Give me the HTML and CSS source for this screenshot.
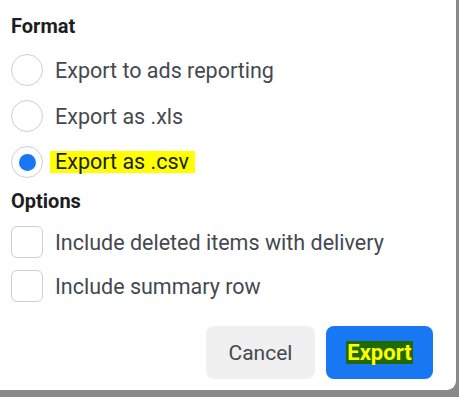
FILE: index.html
```html
<!DOCTYPE html>
<html lang="en">
<head>
  <meta charset="UTF-8">
  <meta name="viewport" content="width=device-width, initial-scale=1.0">
  <title>Export</title>
  <link rel="stylesheet" href="styles.css">
</head>
<body>
  <div class="dialog">
    <h3 class="section-title">Format</h3>
    <div class="choices">
      <label class="choice">
        <span class="radio"></span>
        <span class="choice-text">Export to ads reporting</span>
      </label>
      <label class="choice">
        <span class="radio"></span>
        <span class="choice-text">Export as .xls</span>
      </label>
      <label class="choice">
        <span class="radio checked"></span>
        <span class="choice-text marked">Export as .csv</span>
      </label>
    </div>

    <h3 class="section-title options-title">Options</h3>
    <div class="checks">
      <label class="check">
        <span class="box"></span>
        <span class="choice-text">Include deleted items with delivery</span>
      </label>
      <label class="check">
        <span class="box"></span>
        <span class="choice-text">Include summary row</span>
      </label>
    </div>

    <div class="footer">
      <button class="btn btn-cancel">Cancel</button>
      <button class="btn btn-export"><span class="export-mark">Export</span></button>
    </div>
  </div>
</body>
</html>
```

FILE: styles.css
```css
* {
  margin: 0;
  padding: 0;
  box-sizing: border-box;
}

body {
  font-family: Roboto, 'Liberation Sans', Arial, sans-serif;
  background: #8a8a8a;
  width: 459px;
  height: 397px;
  overflow: hidden;
}

.dialog {
  width: 456px;
  height: 390px;
  background: #fff;
  border-bottom-right-radius: 9px;
  padding: 14px 23px 11px 11px;
  display: flex;
  flex-direction: column;
}

.section-title {
  font-size: 20px;
  line-height: 24px;
  font-weight: 700;
  color: #1c1e21;
  margin-bottom: 9px;
}

.options-title {
  margin-top: 4px;
  margin-bottom: 7px;
}

.choices {
  display: flex;
  flex-direction: column;
}

.choice {
  display: flex;
  align-items: center;
  height: 46px;
  gap: 12px;
}

.choice-text {
  font-size: 21.5px;
  color: #444950;
  white-space: nowrap;
}

.radio {
  width: 32px;
  height: 32px;
  border: 1px solid #ccd0d5;
  border-radius: 50%;
  display: flex;
  align-items: center;
  justify-content: center;
  flex-shrink: 0;
}

.radio.checked::after {
  content: "";
  width: 17px;
  height: 17px;
  border-radius: 50%;
  background: #1877f2;
}

.marked {
  background: #ffff00;
  color: #1c1e21;
  line-height: 22px;
  padding: 0 6px 0 5px;
  margin-left: -5px;
}

.checks {
  display: flex;
  flex-direction: column;
}

.check {
  display: flex;
  align-items: center;
  height: 44px;
  gap: 12px;
}

.box {
  width: 32px;
  height: 32px;
  border: 1px solid #ccd0d5;
  border-radius: 6px;
  flex-shrink: 0;
}

.footer {
  margin-top: auto;
  display: flex;
  justify-content: flex-end;
  gap: 11px;
}

.btn {
  height: 53px;
  border: none;
  border-radius: 8px;
  font-family: inherit;
  font-size: 21px;
}

.btn-cancel {
  width: 109px;
  background: #f0f0f0;
  color: #444950;
}

.btn-export {
  width: 107px;
  background: #1877f2;
}

.export-mark {
  background: #1f6b00;
  color: #ffff00;
  font-weight: 700;
  font-size: 22px;
  line-height: 23px;
  padding: 0 1px;
  display: inline-block;
}
```
